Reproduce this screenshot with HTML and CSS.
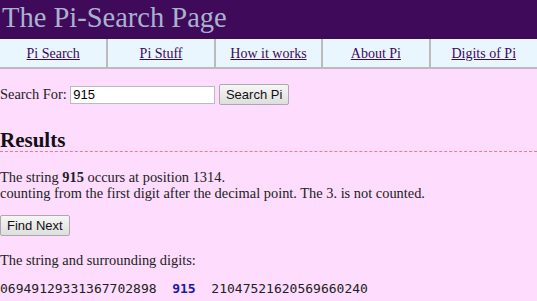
FILE: index.html
```html
<!DOCTYPE html>
<html>
<head>
    <link rel="stylesheet" href="styles.css">
</head>
<body>
    <div class="banner">The Pi-Search Page</div>
    <table class="nav">
        <tr>
            <td><a href="#">Pi Search</a></td>
            <td><a href="#">Pi Stuff</a></td>
            <td><a href="#">How it works</a></td>
            <td><a href="#">About Pi</a></td>
            <td><a href="#">Digits of Pi</a></td>
        </tr>
    </table>

    <form class="search">
        Search For: <input type="text" value="915" class="query"> <button type="button">Search Pi</button>
    </form>

    <h2 class="results">Results</h2>
    <p class="found">
        The string <b>915</b> occurs at position 1314.<br>
        counting from the first digit after the decimal point. The 3. is not counted.
    </p>
    <button type="button" class="next">Find Next</button>
    <p class="context">The string and surrounding digits:</p>
    <div class="digits">06949129331367702898&nbsp;&nbsp;<span class="hit">915</span>&nbsp;&nbsp;21047521620569660240</div>
</body>
</html>
```

FILE: styles.css
```css
body {
    margin: 0;
    background: #fddcfd;
    font-family: "Liberation Serif", serif;
    font-size: 14.4px;
    line-height: 16px;
    color: #222;
}
.banner {
    background: #3f0a5a;
    color: #a9b2cf;
    font-size: 28.5px;
    height: 39px;
    line-height: 36px;
    padding-left: 2px;
}
.nav {
    width: 100%;
    border-collapse: collapse;
    table-layout: fixed;
    background: #eaf6fd;
    border-bottom: 2px solid #bbb;
}
.nav td {
    height: 28px;
    text-align: center;
    border-left: 2px solid #bbb;
    padding: 0;
}
.nav td:first-child {
    border-left: none;
}
.nav a {
    color: #3a0a5a;
    font-size: 14px;
}
.search {
    margin: 15px 0 0 0;
}
.query {
    font-family: "Liberation Sans", Arial, sans-serif;
    font-size: 13px;
    width: 139px;
    height: 14px;
    padding: 1px 2px;
    border: 1px solid #bbb;
}
button {
    font-family: "Liberation Sans", Arial, sans-serif;
    font-size: 13px;
    padding: 2px 6px;
    border: 1px solid #aaa;
    border-radius: 2px;
    background: linear-gradient(#f6f6f6, #dedede);
    color: #111;
}
.results {
    font-size: 21px;
    line-height: 21px;
    margin: 25px 0 0 0;
    padding-bottom: 0;
    border-bottom: 1px dashed #f07a8a;
    color: #111;
}
.found {
    margin: 17px 0 14px 0;
}
.context {
    margin: 16px 0 13px 0;
}
.digits {
    font-family: "DejaVu Sans Mono", monospace;
    font-size: 13px;
    color: #222;
}
.hit {
    color: #1a1a9e;
    font-weight: bold;
}
```
